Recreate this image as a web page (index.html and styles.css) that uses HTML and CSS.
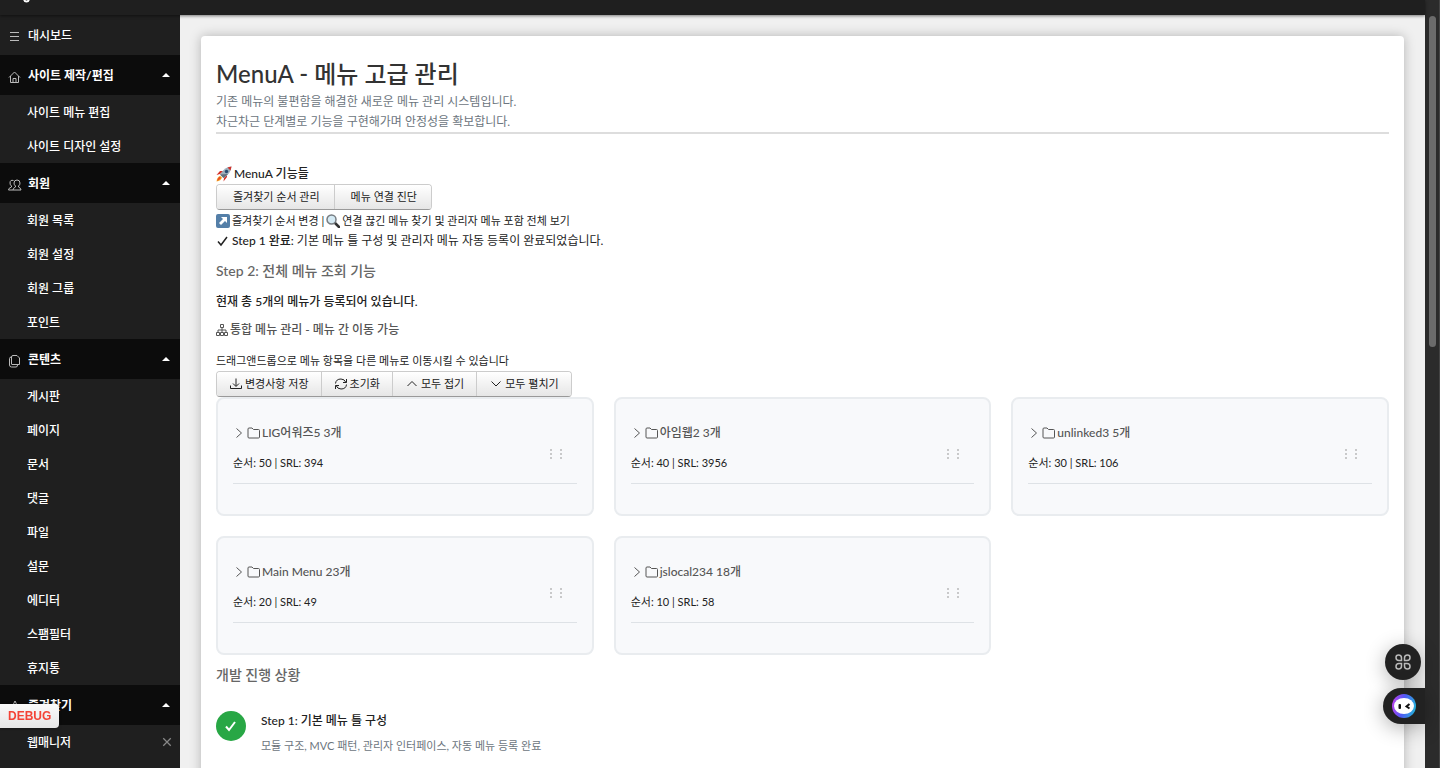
FILE: index.html
```
<!DOCTYPE html>
<html lang="ko">

<head>
    <meta charset="UTF-8">
    <meta name="viewport" content="width=device-width, initial-scale=1">
    <title>MenuA - 메뉴 고급 관리</title>
    <link rel="stylesheet" href="styles.css">
</head>

<body>
    <svg class="sprite" aria-hidden="true">
        <symbol id="caret" viewBox="0 0 8 4"><path d="M0 4 L4 0 L8 4 Z" fill="currentColor" /></symbol>
        <symbol id="right" viewBox="0 0 14 14"><path d="M3.500 2.500 L8.500 7 L3.500 11.500" /></symbol>
        <symbol id="folder" viewBox="0 0 14 14"><path d="M1 11 V3 Q1 2 2 2 H5 L6.500 3.500 H11.500 Q12.500 3.500 12.500 4.500 V11 Q12.500 12 11.500 12 H2 Q1 12 1 11 Z" /></symbol>
        <symbol id="dots" viewBox="0 0 16 12"><path d="M2 2h2M2 6h2M2 10h2M12 2h2M12 6h2M12 10h2" /></symbol>
        <symbol id="check" viewBox="0 0 14 14"><path d="M2 7.500 L5 11 L11 3" /></symbol>
    </svg>

    <div class="shell">
        <header class="topbar">
            <svg class="icon" viewBox="0 0 14 8" aria-hidden="true"><path d="M6 -2 Q6 1.500 8.500 1.500 Q11 1.500 11 -2" /></svg>
        </header>

        <nav class="sidebar">
            <a href="#" class="group plain">
                <svg class="icon" viewBox="0 0 14 14"><path d="M2 2.500h9M2 6.500h9M2 10.500h9" /></svg>
                <span>대시보드</span>
            </a>
            <button type="button" class="group">
                <svg class="icon" viewBox="0 0 14 14"><path d="M1 7.500 L6.500 2 L12 7.500 M2.500 6 V12.500 H10.500 V6 M5 12.500 V8.500 H8 V12.500" /></svg>
                <span>사이트 제작/편집</span>
                <svg class="caret"><use href="#caret" /></svg>
            </button>
            <ul>
                <li><a href="#">사이트 메뉴 편집</a></li>
                <li><a href="#">사이트 디자인 설정</a></li>
            </ul>
            <button type="button" class="group">
                <svg class="icon" viewBox="0 0 14 14"><path d="M5.500 2.500 Q2 1.500 2 5 Q2 7 3.500 8 V9 Q0.500 10 0.500 12 H5 M9 2 Q6 2 6 5 Q6 7 7.500 8 V9 Q5 10 5 12 H13 Q13 10 10.500 9 V8 Q12 7 12 5 Q12 2 9 2" /></svg>
                <span>회원</span>
                <svg class="caret"><use href="#caret" /></svg>
            </button>
            <ul>
                <li><a href="#">회원 목록</a></li>
                <li><a href="#">회원 설정</a></li>
                <li><a href="#">회원 그룹</a></li>
                <li><a href="#">포인트</a></li>
            </ul>
            <button type="button" class="group">
                <svg class="icon" viewBox="0 0 14 14"><path d="M5 1.500 H9 L11.500 4 V10.500 H4 Q3.500 10.500 3.500 10 V3 Q3.500 1.500 5 1.500 M3.500 3 Q1.500 3 1.500 4.500 V11 Q1.500 13 3.500 13 H8 Q9.500 13 9.500 11" /></svg>
                <span>콘텐츠</span>
                <svg class="caret"><use href="#caret" /></svg>
            </button>
            <ul>
                <li><a href="#">게시판</a></li>
                <li><a href="#">페이지</a></li>
                <li><a href="#">문서</a></li>
                <li><a href="#">댓글</a></li>
                <li><a href="#">파일</a></li>
                <li><a href="#">설문</a></li>
                <li><a href="#">에디터</a></li>
                <li><a href="#">스팸필터</a></li>
                <li><a href="#">휴지통</a></li>
            </ul>
            <button type="button" class="group">
                <svg class="icon" viewBox="0 0 14 14"><path d="M7 1 L9 5 L13 5.500 L10 8.500 L11 13 L7 11 L3 13 L4 8.500 L1 5.500 L5 5 Z" /></svg>
                <span>즐겨찾기</span>
                <svg class="caret"><use href="#caret" /></svg>
            </button>
            <ul>
                <li>
                    <a href="#">웹매니저</a>
                    <button type="button" class="remove" aria-label="삭제"><svg viewBox="0 0 8 8"><path d="M1 1 L7 7 M7 1 L1 7" /></svg></button>
                </li>
            </ul>
        </nav>

        <main class="content">
            <div class="panel">
                <div class="page-header">
                    <h1>MenuA - 메뉴 고급 관리</h1>
                    <p>기존 메뉴의 불편함을 해결한 새로운 메뉴 관리 시스템입니다.<br>차근차근 단계별로 기능을 구현해가며 안정성을 확보합니다.</p>
                </div>

                <section class="features">
                    <p class="line strong">
                        <svg class="emoji" viewBox="0 0 16 16" aria-hidden="true">
                            <path d="M4 8 L0.500 9 L4 5 L8 5 Z M8 12 L7.500 15.500 L11 11 V8 Z" fill="#d22f27" />
                            <path d="M4.500 10 Q1 10.500 0.500 15.500 Q5 15 6 11.500 Z" fill="#f4b32e" />
                            <path d="M3.500 10.500 Q1.500 12 1 15 Q3.500 14 5 12 Z" fill="#ec4b25" />
                            <path d="M15.500 0.500 Q9 0.500 4 8.500 L7.500 12 Q15 7.500 15.500 0.500 Z" fill="#9baebb" />
                            <path d="M15.500 0.500 L11.500 1.500 L14.500 4.500 Z" fill="#d22f27" />
                            <path d="M4 8.500 L7.500 12 L12 8 Z" fill="#61717d" />
                            <circle cx="10.500" cy="5.500" r="1.700" fill="#264b70" />
                        </svg>
                        MenuA 기능들
                    </p>
                    <div class="btn-group">
                        <button type="button" class="btn indent">즐겨찾기 순서 관리</button>
                        <button type="button" class="btn indent">메뉴 연결 진단</button>
                    </div>
                    <p class="line small hint">
                        <svg class="emoji" viewBox="0 0 14 14" aria-hidden="true">
                            <rect width="14" height="14" rx="2" fill="#547fa8" />
                            <path d="M5 3 H11 V9 L9 7 L5 11 L3 9 L7 5 Z" fill="#fff" />
                        </svg>
                        즐겨찾기 순서 변경 |
                        <svg class="emoji" viewBox="0 0 14 14" aria-hidden="true">
                            <path d="M9 9 L13 13" stroke="#333" stroke-width="2.500" stroke-linecap="round" />
                            <circle cx="5.500" cy="5.500" r="4.500" fill="#d5eaf4" stroke="#777d82" stroke-width="1.500" />
                        </svg>
                        연결 끊긴 메뉴 찾기 및 관리자 메뉴 포함 전체 보기
                    </p>
                    <p class="line">
                        <svg class="icon tick"><use href="#check" /></svg>
                        <span><strong>Step 1 완료:</strong> 기본 메뉴 틀 구성 및 관리자 메뉴 자동 등록이 완료되었습니다.</span>
                    </p>
                </section>

                <section>
                    <h2>Step 2: 전체 메뉴 조회 기능</h2>
                    <p class="total">현재 총 5개의 메뉴가 등록되어 있습니다.</p>
                    <h3>
                        <svg class="icon" viewBox="0 0 14 14"><path d="M4.500 1.500 h3 v3 h-3 Z M6 4.500 V9 M2 9 V7 H10 V9 M0.500 9.500 h3 v3 h-3 Z M4.500 9.500 h3 v3 h-3 Z M8.500 9.500 h3 v3 h-3 Z" /></svg>
                        통합 메뉴 관리 - 메뉴 간 이동 가능
                    </h3>
                    <p class="line small">드래그앤드롭으로 메뉴 항목을 다른 메뉴로 이동시킬 수 있습니다</p>
                    <div class="btn-group">
                        <button type="button" class="btn"><svg class="icon" viewBox="0 0 14 14"><path d="M7 1.500 V9 M4 6.500 L7 9.500 L10 6.500 M1.500 8.500 V11.500 H12.500 V8.500" /></svg>변경사항 저장</button>
                        <button type="button" class="btn"><svg class="icon" viewBox="0 0 14 14"><path d="M1.500 6.500 Q2 2 7 2 Q10.500 2 12 5.500 M12.500 2 V5.500 H9 M12.500 7.500 Q12 12 7 12 Q3.500 12 2 8.500 M1.500 12 V8.500 H5" /></svg>초기화</button>
                        <button type="button" class="btn"><svg class="icon" viewBox="0 0 14 14"><path d="M2.500 9 L7 4.500 L11.500 9" /></svg>모두 접기</button>
                        <button type="button" class="btn"><svg class="icon" viewBox="0 0 14 14"><path d="M2.500 4.500 L7 9 L11.500 4.500" /></svg>모두 펼치기</button>
                    </div>

                    <div class="menus">
                        <article class="menu">
                            <div class="menu-head">
                                <div>
                                    <h4><svg class="icon"><use href="#right" /></svg><svg class="icon"><use href="#folder" /></svg>LIG어워즈5 3개</h4>
                                    <p>순서: 50 | SRL: 394</p>
                                </div>
                                <svg class="handle"><use href="#dots" /></svg>
                            </div>
                        </article>
                        <article class="menu">
                            <div class="menu-head">
                                <div>
                                    <h4><svg class="icon"><use href="#right" /></svg><svg class="icon"><use href="#folder" /></svg>아임웹2 3개</h4>
                                    <p>순서: 40 | SRL: 3956</p>
                                </div>
                                <svg class="handle"><use href="#dots" /></svg>
                            </div>
                        </article>
                        <article class="menu">
                            <div class="menu-head">
                                <div>
                                    <h4><svg class="icon"><use href="#right" /></svg><svg class="icon"><use href="#folder" /></svg>unlinked3 5개</h4>
                                    <p>순서: 30 | SRL: 106</p>
                                </div>
                                <svg class="handle"><use href="#dots" /></svg>
                            </div>
                        </article>
                        <article class="menu">
                            <div class="menu-head">
                                <div>
                                    <h4><svg class="icon"><use href="#right" /></svg><svg class="icon"><use href="#folder" /></svg>Main Menu 23개</h4>
                                    <p>순서: 20 | SRL: 49</p>
                                </div>
                                <svg class="handle"><use href="#dots" /></svg>
                            </div>
                        </article>
                        <article class="menu">
                            <div class="menu-head">
                                <div>
                                    <h4><svg class="icon"><use href="#right" /></svg><svg class="icon"><use href="#folder" /></svg>jslocal234 18개</h4>
                                    <p>순서: 10 | SRL: 58</p>
                                </div>
                                <svg class="handle"><use href="#dots" /></svg>
                            </div>
                        </article>
                    </div>
                </section>

                <section>
                    <h2>개발 진행 상황</h2>
                    <div class="step">
                        <span class="badge"><svg class="icon"><use href="#check" /></svg></span>
                        <div>
                            <h5>Step 1: 기본 메뉴 틀 구성</h5>
                            <p>모듈 구조, MVC 패턴, 관리자 인터페이스, 자동 메뉴 등록 완료</p>
                        </div>
                    </div>
                </section>
            </div>
        </main>

        <div class="scrollbar"><div class="thumb"></div></div>
    </div>

    <button type="button" class="debug">DEBUG</button>

    <div class="floating">
        <button type="button" class="round" aria-label="앱">
            <svg viewBox="0 0 18 18"><path d="M4.500 2 Q7.500 2 7.500 5 V7.500 H5 Q2 7.500 2 4.500 Q2 2 4.500 2 Z M13.500 2 Q10.500 2 10.500 5 V7.500 H13 Q16 7.500 16 4.500 Q16 2 13.500 2 Z M4.500 16 Q7.500 16 7.500 13 V10.500 H5 Q2 10.500 2 13.500 Q2 16 4.500 16 Z M13.500 16 Q10.500 16 10.500 13 V10.500 H13 Q16 10.500 16 13.500 Q16 16 13.500 16 Z" /></svg>
        </button>
        <button type="button" class="bot" aria-label="도우미">
            <svg viewBox="0 0 24 24">
                <defs>
                    <linearGradient id="ring" x1="0" y1="0.600" x2="1" y2="0.800">
                        <stop offset="0" stop-color="#b044ee" />
                        <stop offset="0.400" stop-color="#5257f5" />
                        <stop offset="1" stop-color="#20b8d8" />
                    </linearGradient>
                </defs>
                <circle cx="12" cy="12" r="12" fill="url(#ring)" />
                <ellipse cx="12" cy="12" rx="10" ry="8" fill="#fff" />
                <rect x="6.500" y="10" width="2.500" height="5" rx="1" fill="#111" />
                <path d="M17.500 10 L14.500 12.500 L17.500 14.500" fill="none" stroke="#111" stroke-width="2" />
            </svg>
        </button>
    </div>
</body>

</html>
```
FILE: styles.css
```
* {
    box-sizing: border-box;
}

body {
    margin: 0;
    font-family: Lato, "Noto Sans CJK KR", sans-serif;
    font-size: 12px;
    line-height: 20px;
    color: #222;
    overflow: hidden;
}

h1, h2, h3, h4, h5, p, ul {
    margin: 0;
    padding: 0;
}

button {
    font: inherit;
    border: 0;
    cursor: pointer;
}

a {
    color: inherit;
    text-decoration: none;
}

.sprite {
    display: none;
}

.icon {
    width: 14px;
    height: 14px;
    flex: none;
    fill: none;
    stroke: currentColor;
    stroke-width: 1;
}

.shell {
    display: grid;
    grid-template-columns: 180px 1fr 15px;
    grid-template-rows: 15px 1fr;
    height: 100vh;
}

.topbar {
    grid-column: 1 / 3;
    padding-left: 18px;
    background: #1f1f1f;
    color: #fff;
    box-shadow: 0 1px 3px rgba(0, 0, 0, 0.5);
    z-index: 1;
}

.topbar .icon {
    display: block;
    height: 8px;
    stroke-width: 2;
}

/* sidebar */
.sidebar {
    min-height: 0;
    overflow: hidden;
    background: #1f1f1f;
    color: #fff;
}

.sidebar ul {
    list-style: none;
}

.sidebar li {
    display: flex;
    align-items: center;
    height: 34px;
    padding: 0 8px 0 27px;
    font-weight: 500;
}

.sidebar li a {
    flex: 1;
    padding-top: 2px;
}

.group {
    display: flex;
    align-items: center;
    width: 100%;
    height: 40px;
    padding: 0 10px 0 8px;
    gap: 6px;
    background: #0c0c0c;
    color: #fff;
    font-weight: 700;
    text-align: left;
}

.group.plain {
    background: none;
    font-weight: 500;
}

.group span {
    flex: 1;
    padding-top: 2px;
}

.group .icon {
    color: #bbb;
    margin-top: 4px;
}

.caret {
    width: 8px;
    height: 4px;
}

.remove {
    display: flex;
    padding: 0;
    background: none;
}

.remove svg {
    width: 10px;
    height: 10px;
    stroke: #888;
}

/* content */
.content {
    min-width: 0;
    min-height: 0;
    overflow: hidden;
    padding: 21px;
    background: #f0f0f0;
}

.panel {
    min-height: 100vh;
    padding: 15px;
    background: #fff;
    border-radius: 4px;
    box-shadow: 0 0 12px rgba(0, 0, 0, 0.25);
}

.page-header {
    border-bottom: 2px solid #ddd;
    margin-bottom: 30px;
}

.page-header h1 {
    padding-top: 5px;
    font-size: 24px;
    font-weight: 500;
    line-height: 36px;
    color: #333;
}

.page-header p {
    color: #6c757d;
}

.line {
    display: flex;
    align-items: center;
    gap: 2px;
}

.strong,
strong,
.total {
    font-weight: 500;
}

.small {
    font-size: 11px;
}

.hint {
    padding-top: 1px;
}

.emoji {
    width: 14px;
    height: 14px;
    flex: none;
}

.strong .emoji {
    width: 16px;
    height: 16px;
}

.tick {
    stroke-width: 1.5;
}

.btn-group {
    display: flex;
    width: fit-content;
    border: 1px solid #ccc;
    border-bottom-color: #999;
    border-radius: 4px;
    overflow: hidden;
}

.btn {
    display: flex;
    align-items: center;
    gap: 2px;
    height: 24px;
    padding: 0 12px;
    font-size: 11px;
    color: #222;
    background: linear-gradient(#fff, #e6e6e6);
}

.btn + .btn {
    border-left: 1px solid #ccc;
}

.btn.indent {
    padding: 0 14px 0 16px;
}

h2 {
    padding: 10px 0 11px;
    font-size: 14px;
    font-weight: 500;
    color: #666;
}

h3 {
    display: flex;
    align-items: center;
    padding: 8px 0 11px;
    font-size: 12px;
    font-weight: 500;
    color: #555;
}

.menus {
    display: grid;
    grid-template-columns: repeat(3, 1fr);
    gap: 20px;
}

.menu {
    padding: 15px 15px 30px;
    background: #f8f9fb;
    border: 2px solid #e9ecef;
    border-radius: 8px;
}

.menu-head {
    display: flex;
    justify-content: space-between;
    align-items: center;
    padding: 9px 13px 10px 0;
    border-bottom: 1px solid #dee2e6;
}

.menu h4 {
    display: flex;
    align-items: center;
    padding-bottom: 10px;
    font-size: 12px;
    font-weight: 500;
    color: #555;
}

.menu h4 .icon + .icon {
    margin-right: 1px;
}

.menu p {
    font-size: 11px;
}

.handle {
    width: 16px;
    height: 12px;
    margin-top: 12px;
    stroke: #999;
}

.step {
    display: flex;
    gap: 15px;
    padding-top: 15px;
}

.badge {
    display: flex;
    align-items: center;
    justify-content: center;
    width: 30px;
    height: 30px;
    border-radius: 50%;
    background: #28a745;
    color: #fff;
}

.badge .icon {
    stroke-width: 2;
}

.step h5 {
    padding-bottom: 5px;
    font-size: 12px;
    font-weight: 500;
}

.step p {
    font-size: 11px;
    color: #6c757d;
}

/* browser-side scrollbar */
.scrollbar {
    grid-column: 3;
    grid-row: 1 / 3;
    padding: 16px 3px 0 4px;
    background: #2b2b2b;
    border-right: 1px solid #444;
}

.thumb {
    height: 44%;
    border-radius: 4px;
    background: #6b6b6b;
}

/* overlays */
.debug {
    position: fixed;
    left: 0;
    bottom: 40px;
    height: 24px;
    padding: 0 8px;
    border-radius: 0 4px 4px 0;
    background: linear-gradient(#fafafa, #e6e6e6);
    box-shadow: 0 0 3px rgba(0, 0, 0, 0.5);
    color: #f44336;
    font: bold 12px "Liberation Sans", Arial, sans-serif;
    z-index: 2;
}

.floating {
    position: fixed;
    right: 15px;
    bottom: 44px;
    display: flex;
    flex-direction: column;
    align-items: flex-end;
    gap: 8px;
    z-index: 2;
}

.floating button {
    display: flex;
    align-items: center;
    height: 36px;
    background: #222;
    box-shadow: 0 4px 20px rgba(0, 0, 0, 0.3);
}

.round {
    width: 36px;
    margin-right: 4px;
    padding: 9px;
    border-radius: 50%;
}

.round svg {
    width: 18px;
    height: 18px;
    fill: none;
    stroke: #bbb;
    stroke-width: 1.5;
}

.bot {
    width: 42px;
    padding: 0 9px;
    border-radius: 18px 0 0 18px;
}

.bot svg {
    width: 24px;
    height: 24px;
}
```
